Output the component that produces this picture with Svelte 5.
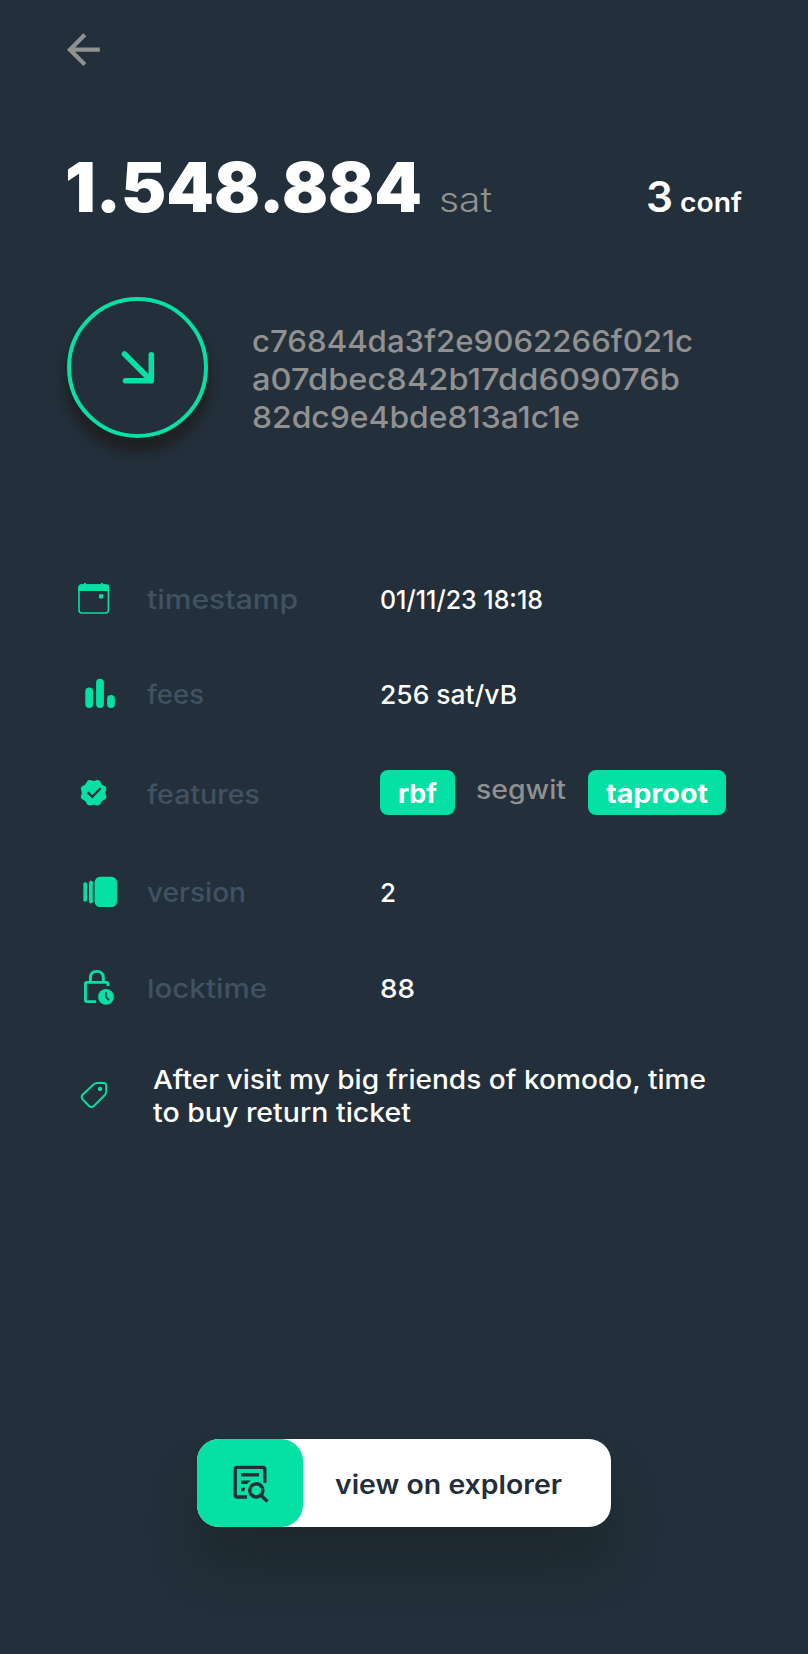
<script>
  const rows = [
    { id: 'timestamp', h: 96, cy: 600, w: 151, value: '01/11/23 18:18', vw: 163 },
    { id: 'fees', h: 94, cy: 695, w: 57, value: '256 sat/vB', vw: 137 },
    { id: 'features', h: 101, cy: 793, w: 113 },
    { id: 'version', h: 99, cy: 893, w: 99, value: '2', vw: 16 },
    { id: 'locktime', h: 94, cy: 989, w: 120, value: '88', vw: 35 },
  ];
  const hash = [
    ['c76844da3f2e9062266f021c', 441],
    ['a07dbec842b17dd609076b', 428],
    ['82dc9e4bde813a1c1e', 328],
  ];
  // Rosette outline: a circle whose radius swells eight times around.
  const rosette =
    'M' +
    Array.from({ length: 96 }, (_, i) => {
      const a = (i / 96) * 2 * Math.PI;
      const r = 12.7 - 0.85 * Math.cos(8 * a);
      return `${(93.6 + r * Math.cos(a)).toFixed(2)} ${(792.8 + r * Math.sin(a)).toFixed(2)}`;
    }).join('L') +
    'Z';
</script>

{#snippet line(text, width, height, base, cls)}
  <svg class="line {cls}" {width} {height}>
    <text x="0" y={base} textLength={width} lengthAdjust="spacingAndGlyphs">{text}</text>
  </svg>
{/snippet}

{#snippet icon(id)}
  {#if id === 'timestamp'}
    <rect x="79" y="585" width="29.4" height="28" rx="3" class="stroke" stroke-width="1.6" />
    <path d="M78.3 591V587.5Q78.3 584.3 81.5 584.3H84V583H86V584.3H101V583H103V584.3H106Q109.2 584.3 109.2 587.5V591Z" />
    <rect x="99" y="594.2" width="4.2" height="4.2" rx=".6" />
  {:else if id === 'fees'}
    <rect x="85.3" y="687.5" width="7.8" height="20.5" rx="3.9" />
    <rect x="96.1" y="678.7" width="7.8" height="29.3" rx="3.9" />
    <rect x="107.1" y="695" width="7.8" height="13" rx="3.9" />
  {:else if id === 'features'}
    <path d={rosette} />
    <path d="M87.8 792.4L92.2 796.8L100.6 788.2" class="cut" stroke-width="2.3" />
  {:else if id === 'version'}
    <rect x="83.4" y="882.2" width="3.7" height="19.3" rx="1.5" />
    <rect x="89" y="880.7" width="3.8" height="22.6" rx="1.5" />
    <rect x="94.6" y="876.8" width="22.4" height="30.2" rx="5.5" />
  {:else if id === 'locktime'}
    <path d="M108 986V984Q108 982.4 106.4 982.4H87Q85.4 982.4 85.4 984V1000Q85.4 1001.6 87 1001.6H96.2" class="stroke" stroke-width="2.9" />
    <path d="M90.4 982V978Q90.4 971.4 96.8 971.4Q103.3 971.4 103.3 978V982" class="stroke" stroke-width="2.9" />
    <circle cx="106" cy="996.8" r="7.9" />
    <path d="M106 992V997.2L109 1000.2" class="cut" stroke-width="1.7" />
  {/if}
{/snippet}

<main>
  <header>
    <svg class="back" width="34" height="34" viewBox="67 33 34 34">
      <path d="M99.8 49.7H71M84.8 34.8L69.9 49.7L84.8 64.6" />
    </svg>
  </header>

  <section class="amount">
    {@render line('1.548.884', 357, 60, 50, 'total')}
    {@render line('sat', 53, 60, 50, 'unit')}
    <div class="conf">
      {@render line('3', 27, 60, 50, 'count')}
      {@render line('conf', 62, 60, 50, 'word')}
    </div>
  </section>

  <section class="tx">
    <div class="ring">
      <svg width="36" height="36" viewBox="119 349 36 36">
        <path d="M123.5 353L150.3 379.8M150.3 353.8V379.8H124.5" />
      </svg>
    </div>
    <div class="hash">
      {#each hash as [text, w]}
        {@render line(text, w, 38, 29, 'hashline')}
      {/each}
    </div>
  </section>

  <section class="details">
    {#each rows as row}
      <div class="row" style="height: {row.h}px">
        <svg class="icon" width="80" height="40" viewBox="67 {row.cy - 20} 80 40">{@render icon(row.id)}</svg>
        <div class="key">{@render line(row.id, row.w, 40, row.id === 'features' ? 30.5 : 29.3, 'label')}</div>
        {#if row.value}
          {@render line(row.value, row.vw, 40, 29.3, 'value')}
        {:else}
          <div class="tags">
            <span class="chip">{@render line('rbf', 39, 45, 33.3, 'on')}</span>
            {@render line('segwit', 90, 45, 29.3, 'off')}
            <span class="chip">{@render line('taproot', 102, 45, 33.3, 'on')}</span>
          </div>
        {/if}
      </div>
    {/each}
    <div class="note">
      <svg class="icon" width="86" height="40" viewBox="67 1075 86 40">
        <path class="stroke" stroke-width="1.9" d="M97.5 1083H103.5Q106.2 1083 106.2 1085.5V1091.5Q106.2 1093.5 104.8 1095L94.2 1105.7Q91.5 1108.2 88.8 1105.7L82.8 1099.6Q80.4 1097 82.8 1094.5L93.5 1084.5Q95.2 1083 97.5 1083Z" />
        <circle cx="100" cy="1088.9" r="2.2" />
      </svg>
      <div>
        {@render line('After visit my big friends of komodo, time', 553, 33, 27.3, 'value')}
        {@render line('to buy return ticket', 258, 33, 27.3, 'value')}
      </div>
    </div>
  </section>

  <button>
    <span class="badge">
      <svg width="36" height="38" viewBox="233 1465 36 38">
        <path d="M264.8 1483V1469.5Q264.8 1467.4 262.7 1467.4H237.3Q235.2 1467.4 235.2 1469.5V1495Q235.2 1497 237.3 1497H247" />
        <path d="M241 1474.8H259" />
        <path class="solid" d="M241 1480.6H250.6L247 1484.1H241ZM241 1487.8H245.1L244.2 1491.3H241Z" />
        <circle cx="256.3" cy="1490.4" r="6.6" />
        <path d="M261 1495.2L267.4 1501.6" />
      </svg>
    </span>
    {@render line('view on explorer', 227, 88, 54.7, 'cta')}
  </button>
</main>

<style>
  :global(body) {
    margin: 0;
    background: #232f3a;
  }
  main {
    box-sizing: border-box;
    width: 808px;
    height: 1654px;
    padding: 33px 66px 0 67px;
    overflow: hidden;
    display: flex;
    flex-direction: column;
    background: #232f3a;
    font-family: Inter, 'Open Sans', sans-serif;
  }
  svg {
    display: block;
    flex: none;
    overflow: visible;
  }
  .back path {
    fill: none;
    stroke: #919191;
    stroke-width: 4.2;
  }
  header {
    height: 129px;
  }
  .amount {
    display: flex;
    height: 60px;
  }
  .conf {
    display: flex;
    gap: 7px;
    margin-left: auto;
  }
  .total {
    margin-left: -2px;
    font-size: 68.5px;
    font-weight: 900;
    fill: #fff;
  }
  .unit {
    margin-left: 17px;
    font-size: 35px;
    font-weight: 300;
    fill: #919191;
  }
  .count {
    font-size: 42px;
    font-weight: 600;
    fill: #fff;
  }
  .word {
    font-size: 27px;
    font-weight: 600;
    fill: #fff;
  }
  .tx {
    display: flex;
    align-items: flex-start;
    margin-top: 75px;
    height: 255px;
  }
  .ring {
    box-sizing: border-box;
    width: 141px;
    height: 141px;
    border: 4.5px solid #05e1a4;
    border-radius: 50%;
    display: flex;
    align-items: center;
    justify-content: center;
    background: #232f3a;
    box-shadow: 0 12px 10px 3px rgba(29, 29, 29, 0.75);
  }
  .ring path {
    fill: none;
    stroke: #05e1a4;
    stroke-width: 5.6;
    stroke-linecap: round;
    stroke-linejoin: round;
  }
  .hash {
    margin: 26px 0 0 44px;
  }
  .hashline {
    font-size: 30.5px;
    font-weight: 550;
    fill: #919191;
  }
  .row {
    display: flex;
    align-items: center;
  }
  .icon {
    fill: #05e1a4;
  }
  .stroke {
    fill: none;
    stroke: #05e1a4;
  }
  .cut {
    fill: none;
    stroke: #232f3a;
  }
  .key {
    width: 233px;
  }
  .label {
    font-size: 26px;
    font-weight: 550;
    fill: #415262;
  }
  .value {
    font-size: 26px;
    font-weight: 450;
    fill: #fff;
  }
  .tags {
    display: flex;
  }
  .chip {
    padding: 0 18px;
    border-radius: 8px;
    background: #05e1a4;
  }
  .on {
    font-size: 26px;
    font-weight: 650;
    fill: #fff;
  }
  .off {
    margin: 0 22px 0 21px;
    font-size: 26px;
    font-weight: 450;
    fill: #919191;
  }
  .note {
    display: flex;
    align-items: center;
    height: 118px;
  }
  button {
    display: flex;
    width: 414px;
    height: 88px;
    margin: 285px 0 0 130px;
    padding: 0;
    border: 0;
    border-radius: 22px;
    background: #fff;
    font-family: inherit;
    box-shadow: 0 40px 50px -4px rgba(22, 30, 32, 0.45);
  }
  .badge {
    width: 106px;
    height: 88px;
    margin-right: 32px;
    border-radius: 22px;
    background: #05e1a4;
    display: flex;
    align-items: center;
    justify-content: center;
  }
  .badge svg {
    margin: 1px 0 0 1px;
    fill: none;
    stroke: #232e3a;
    stroke-width: 3.4;
  }
  .badge .solid {
    fill: #232e3a;
    stroke: none;
  }
  .cta {
    font-size: 26px;
    font-weight: 560;
    fill: #232e3a;
  }
</style>
